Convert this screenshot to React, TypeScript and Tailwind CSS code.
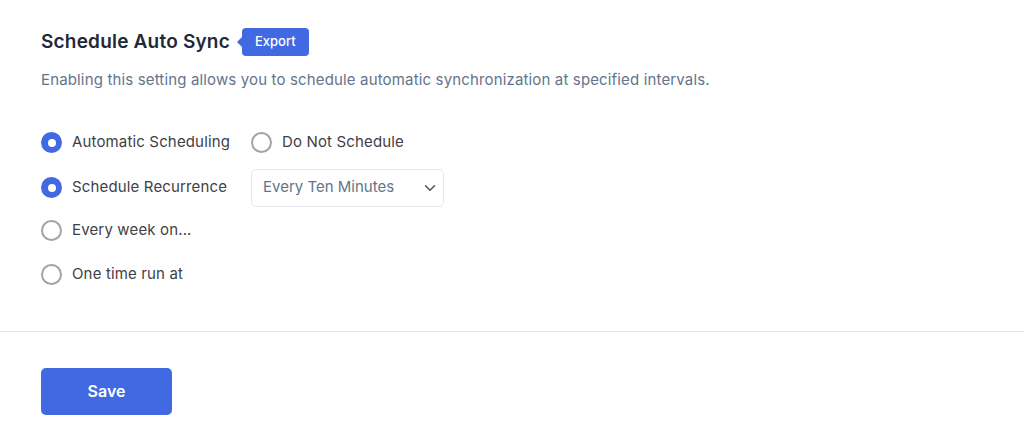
import { ChevronDown } from 'lucide-react'

const Radio = ({ checked, label }: { checked?: boolean; label: string }) => (
  <label className="flex items-center gap-[10px] cursor-pointer">
    {checked ? (
      <span className="w-[21px] h-[21px] rounded-full bg-[#4169e1] flex items-center justify-center">
        <span className="w-[8px] h-[8px] rounded-full bg-white" />
      </span>
    ) : (
      <span className="w-[21px] h-[21px] rounded-full border-2 border-[#a3a3a3] bg-white" />
    )}
    <span className="text-[15px] tracking-[0.15px] text-[#3f3f46]">{label}</span>
  </label>
)

export default function App() {
  return (
    <div className="w-[1024px] h-[442px] bg-white font-['Inter',sans-serif] overflow-hidden">
      <div className="px-[41px] pt-[28px]">
        {/* Heading with export tag */}
        <div className="flex items-center h-[28px]">
          <h2 className="text-[19px] font-semibold tracking-[0.2px] text-[#1f2937]">Schedule Auto Sync</h2>
          <div className="relative ml-[12px] h-[28px] px-[13px] flex items-center rounded-[4px] bg-[#4169e1] text-white text-[13px] font-medium">
            <span className="absolute left-[-5px] top-[9px] w-0 h-0 border-y-[5px] border-y-transparent border-r-[5px] border-r-[#4169e1]" />
            Export
          </div>
        </div>

        <p className="mt-[13px] text-[15px] tracking-[0.15px] text-[#64748b]">
          Enabling this setting allows you to schedule automatic synchronization at specified intervals.
        </p>

        <div className="mt-[36px] flex flex-col">
          <div className="flex items-center h-[30px]">
            <div className="w-[210px]">
              <Radio checked label="Automatic Scheduling" />
            </div>
            <Radio label="Do Not Schedule" />
          </div>
          <div className="flex items-center h-[38px] mt-[11px]">
            <div className="w-[210px]">
              <Radio checked label="Schedule Recurrence" />
            </div>
            <div className="w-[193px] h-[38px] border border-[#e2e8f0] rounded-[5px] flex items-center justify-between pl-[11px] pr-[4px]">
              <span className="text-[15px] text-[#64748b]">Every Ten Minutes</span>
              <ChevronDown className="w-[18px] h-[18px] text-[#475569]" strokeWidth={2} />
            </div>
          </div>
          <div className="flex items-center h-[30px] mt-[9px]">
            <Radio label="Every week on..." />
          </div>
          <div className="flex items-center h-[30px] mt-[14px]">
            <Radio label="One time run at" />
          </div>
        </div>
      </div>

      <div className="mt-[41px] border-t border-[#e5e7eb]" />

      <div className="px-[41px] pt-[36px]">
        <button className="w-[131px] h-[47px] rounded-[5px] bg-[#4169e1] text-white text-[16px] font-semibold">
          Save
        </button>
      </div>
    </div>
  )
}
